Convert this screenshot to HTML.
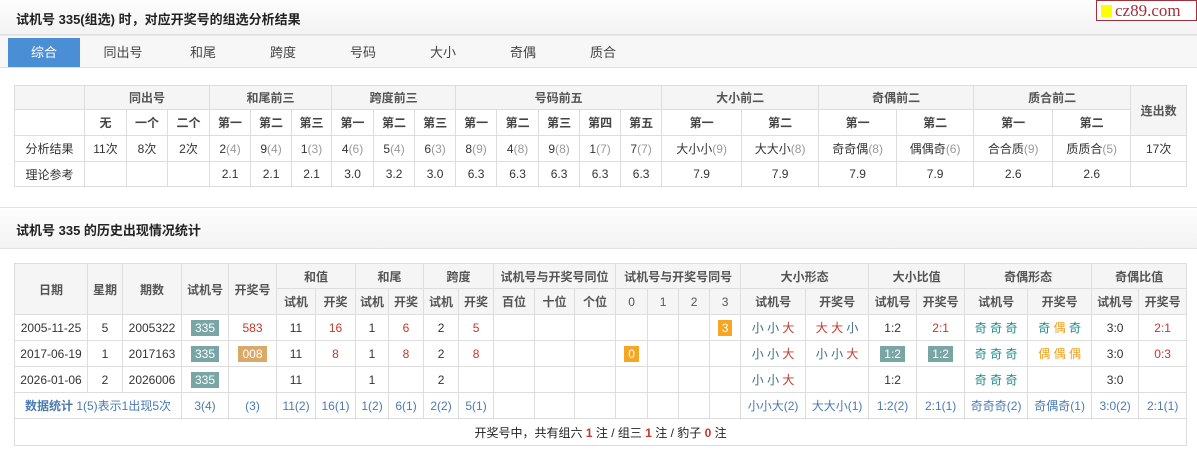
<!DOCTYPE html>
<html><head><meta charset="utf-8"><style>
*{margin:0;padding:0;box-sizing:border-box}
body{width:1197px;height:455px;background:#fff;font-family:"Liberation Sans","Noto Sans CJK SC",sans-serif;font-size:12px;color:#333;position:relative;overflow:hidden}
.bar{position:absolute;left:0;width:1197px;background:linear-gradient(#fdfdfd,#f3f3f3);border-bottom:1px solid #e2e2e2}
.bar b{position:absolute;left:16px;font-size:13px;color:#222}
.tabs{position:absolute;left:0;top:35px;width:1197px;height:33px;background:#f7f7f7;border-top:1px solid #e6e6e6;border-bottom:1px solid #e2e2e2}
.tab{position:absolute;top:2px;height:29px;width:72px;line-height:29px;text-align:center;font-size:13px;color:#444}
.tab.on{background:#4a8fd6;color:#fff}
table{position:absolute;border-collapse:collapse;table-layout:fixed}
td{border:1px solid #ddd;text-align:center;white-space:nowrap;overflow:hidden;padding:0}
.h{background:#f5f5f5;color:#555;font-weight:bold}
.sh{color:#444;font-weight:bold}
.g{color:#999}
.r{color:#c0392b}
.bd{display:inline-block;padding:0 4px;line-height:16px;color:#fff}
.t{background:#7aa5a5}.o{background:#d9a968}.y{background:#f5a623}
.x{color:#3b6f88}.d{color:#c0392b}.j{color:#1a8a8a}.e{color:#f0a020}
.st td{color:#4a7bb0}
</style></head><body>
<div class="bar" style="top:0;height:35px"><b style="top:9px">试机号 335(组选) 时，对应开奖号的组选分析结果</b></div>
<div style="position:absolute;right:0;top:0;width:101px;height:21px;border:1px solid #a0303a;background:#fff;font-family:'Liberation Serif',serif;font-size:17px;color:#a0303a;line-height:19px;padding-left:18px">cz89.com<span style="position:absolute;left:4px;top:4px;width:11px;height:12px;background:#ff0"></span></div>
<div class="tabs">
<div class="tab on" style="left:8px">综合</div>
<div class="tab" style="left:87px">同出号</div>
<div class="tab" style="left:167px">和尾</div>
<div class="tab" style="left:247px">跨度</div>
<div class="tab" style="left:327px">号码</div>
<div class="tab" style="left:407px">大小</div>
<div class="tab" style="left:487px">奇偶</div>
<div class="tab" style="left:567px">质合</div>
</div>

<table style="left:14px;top:85px;width:1172px">
<colgroup><col style="width:70px"><col style="width:42px"><col style="width:41px"><col style="width:42px"><col style="width:41px"><col style="width:41px"><col style="width:40px"><col style="width:42px"><col style="width:41px"><col style="width:41px"><col style="width:41px"><col style="width:42px"><col style="width:41px"><col style="width:41px"><col style="width:41px"><col style="width:80px"><col style="width:77px"><col style="width:78px"><col style="width:77px"><col style="width:79px"><col style="width:78px"><col style="width:56px"></colgroup>
<tr style="height:24px" class="h"><td></td><td colspan="3">同出号</td><td colspan="3">和尾前三</td><td colspan="3">跨度前三</td><td colspan="5">号码前五</td><td colspan="2">大小前二</td><td colspan="2">奇偶前二</td><td colspan="2">质合前二</td><td rowspan="2">连出数</td></tr>
<tr style="height:26px" class="sh"><td style="background:#fff"></td><td>无</td><td>一个</td><td>二个</td><td>第一</td><td>第二</td><td>第三</td><td>第一</td><td>第二</td><td>第三</td><td>第一</td><td>第二</td><td>第三</td><td>第四</td><td>第五</td><td>第一</td><td>第二</td><td>第一</td><td>第二</td><td>第一</td><td>第二</td></tr>
<tr style="height:26px"><td>分析结果</td><td>11次</td><td>8次</td><td>2次</td><td>2<span class="g">(4)</span></td><td>9<span class="g">(4)</span></td><td>1<span class="g">(3)</span></td><td>4<span class="g">(6)</span></td><td>5<span class="g">(4)</span></td><td>6<span class="g">(3)</span></td><td>8<span class="g">(9)</span></td><td>4<span class="g">(8)</span></td><td>9<span class="g">(8)</span></td><td>1<span class="g">(7)</span></td><td>7<span class="g">(7)</span></td><td>大小小<span class="g">(9)</span></td><td>大大小<span class="g">(8)</span></td><td>奇奇偶<span class="g">(8)</span></td><td>偶偶奇<span class="g">(6)</span></td><td>合合质<span class="g">(9)</span></td><td>质质合<span class="g">(5)</span></td><td>17次</td></tr>
<tr style="height:25px"><td>理论参考</td><td></td><td></td><td></td><td>2.1</td><td>2.1</td><td>2.1</td><td>3.0</td><td>3.2</td><td>3.0</td><td>6.3</td><td>6.3</td><td>6.3</td><td>6.3</td><td>6.3</td><td>7.9</td><td>7.9</td><td>7.9</td><td>7.9</td><td>2.6</td><td>2.6</td><td></td></tr>
</table>

<div style="position:absolute;left:0;top:196px;width:1197px;height:12px;border-bottom:1px solid #e2e2e2"></div>
<div class="bar" style="top:209px;height:40px"><b style="top:11px">试机号 335 的历史出现情况统计</b></div>

<table style="left:14px;top:263px;width:1172px">
<colgroup><col style="width:73px"><col style="width:35px"><col style="width:59px"><col style="width:47px"><col style="width:48px"><col style="width:39px"><col style="width:40px"><col style="width:33px"><col style="width:35px"><col style="width:35px"><col style="width:35px"><col style="width:41px"><col style="width:40px"><col style="width:41px"><col style="width:32px"><col style="width:31px"><col style="width:31px"><col style="width:31px"><col style="width:65px"><col style="width:63px"><col style="width:48px"><col style="width:48px"><col style="width:63px"><col style="width:64px"><col style="width:47px"><col style="width:48px"></colgroup>
<tr style="height:25px" class="h"><td rowspan="2">日期</td><td rowspan="2">星期</td><td rowspan="2">期数</td><td rowspan="2">试机号</td><td rowspan="2">开奖号</td><td colspan="2">和值</td><td colspan="2">和尾</td><td colspan="2">跨度</td><td colspan="3">试机号与开奖号同位</td><td colspan="4">试机号与开奖号同号</td><td colspan="2">大小形态</td><td colspan="2">大小比值</td><td colspan="2">奇偶形态</td><td colspan="2">奇偶比值</td></tr>
<tr style="height:26px" class="h"><td>试机</td><td>开奖</td><td>试机</td><td>开奖</td><td>试机</td><td>开奖</td><td>百位</td><td>十位</td><td>个位</td><td style="font-weight:normal">0</td><td style="font-weight:normal">1</td><td style="font-weight:normal">2</td><td style="font-weight:normal">3</td><td>试机号</td><td>开奖号</td><td>试机号</td><td>开奖号</td><td>试机号</td><td>开奖号</td><td>试机号</td><td>开奖号</td></tr>
<tr style="height:26px"><td>2005-11-25</td><td>5</td><td>2005322</td><td><span class="bd t">335</span></td><td class="r">583</td><td>11</td><td class="r">16</td><td>1</td><td class="r">6</td><td>2</td><td class="r">5</td><td></td><td></td><td></td><td></td><td></td><td></td><td><span class="bd y">3</span></td><td><span class="x">小 小 </span><span class="d">大</span></td><td><span class="d">大 大 </span><span class="x">小</span></td><td>1:2</td><td class="r">2:1</td><td class="j">奇 奇 奇</td><td><span class="j">奇 </span><span class="e">偶</span><span class="j"> 奇</span></td><td>3:0</td><td class="r">2:1</td></tr>
<tr style="height:26px"><td>2017-06-19</td><td>1</td><td>2017163</td><td><span class="bd t">335</span></td><td><span class="bd o">008</span></td><td>11</td><td class="r">8</td><td>1</td><td class="r">8</td><td>2</td><td class="r">8</td><td></td><td></td><td></td><td><span class="bd y">0</span></td><td></td><td></td><td></td><td><span class="x">小 小 </span><span class="d">大</span></td><td><span class="x">小 小 </span><span class="d">大</span></td><td><span class="bd t">1:2</span></td><td><span class="bd t">1:2</span></td><td class="j">奇 奇 奇</td><td class="e">偶 偶 偶</td><td>3:0</td><td class="r">0:3</td></tr>
<tr style="height:26px"><td>2026-01-06</td><td>2</td><td>2026006</td><td><span class="bd t">335</span></td><td></td><td>11</td><td></td><td>1</td><td></td><td>2</td><td></td><td></td><td></td><td></td><td></td><td></td><td></td><td></td><td><span class="x">小 小 </span><span class="d">大</span></td><td></td><td>1:2</td><td></td><td class="j">奇 奇 奇</td><td></td><td>3:0</td><td></td></tr>
<tr style="height:26px" class="st"><td colspan="3"><b>数据统计</b> 1(5)表示1出现5次</td><td>3(4)</td><td>(3)</td><td>11(2)</td><td>16(1)</td><td>1(2)</td><td>6(1)</td><td>2(2)</td><td>5(1)</td><td></td><td></td><td></td><td></td><td></td><td></td><td></td><td>小小大(2)</td><td>大大小(1)</td><td>1:2(2)</td><td>2:1(1)</td><td>奇奇奇(2)</td><td>奇偶奇(1)</td><td>3:0(2)</td><td>2:1(1)</td></tr>
<tr style="height:27px"><td colspan="26" style="color:#222">开奖号中，共有组六 <b class="r">1</b> 注 / 组三 <b class="r">1</b> 注 / 豹子 <b class="r">0</b> 注</td></tr>
</table>
</body></html>
